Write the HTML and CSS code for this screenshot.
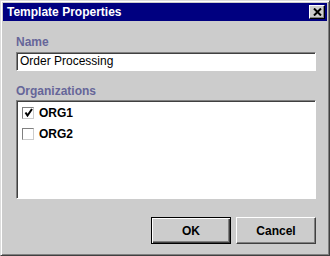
FILE: index.html
```html
<!DOCTYPE html>
<html lang="en">
<head>
  <meta charset="UTF-8" />
  <title>Template Properties</title>
  <link rel="stylesheet" href="styles.css">
</head>
<body>
  <div class="window">
    <div class="titlebar">
      <span class="title">Template Properties</span>
      <div class="close-btn">
        <svg width="9" height="8" viewBox="0 0 9 8">
          <path d="M1 0.5 L8 7.5 M8 0.5 L1 7.5" stroke="#000" stroke-width="2" fill="none"/>
        </svg>
      </div>
    </div>

    <div class="content">
      <div class="label">Name</div>
      <div class="textfield">Order Processing</div>

      <div class="label label-orgs">Organizations</div>
      <div class="list">
        <div class="row">
          <span class="checkbox">
            <svg width="9" height="9" viewBox="0 0 9 9">
              <path d="M1.5 4.5 L3.5 7.5 L8 1" stroke="#000" stroke-width="2" fill="none"/>
            </svg>
          </span>
          <span class="row-text">ORG1</span>
        </div>
        <div class="row">
          <span class="checkbox"></span>
          <span class="row-text">ORG2</span>
        </div>
      </div>

      <div class="buttons">
        <div class="btn btn-default">OK</div>
        <div class="btn">Cancel</div>
      </div>
    </div>
  </div>
</body>
</html>
```

FILE: styles.css
```css
body { margin: 0; font-family: "Liberation Sans", Arial, sans-serif; font-size: 12px; background: #cccccc; }

.window { width: 330px; height: 256px; box-sizing: border-box; background: #cccccc; border-top: 1px solid #dcdcdc; border-left: 1px solid #dcdcdc; border-right: 1px solid #404040; border-bottom: 1px solid #404040; padding: 2px; box-shadow: inset 1px 1px 0 #ffffff, inset -1px -1px 0 #808080; display: flex; flex-direction: column; }

.titlebar { height: 18px; background: #000080; display: flex; align-items: center; justify-content: space-between; padding: 0 2px 0 4px; }
.title { color: #ffffff; font-weight: bold; font-size: 12px; }
.close-btn { width: 16px; height: 14px; box-sizing: border-box; background: #cccccc; border-top: 1px solid #ffffff; border-left: 1px solid #ffffff; border-right: 1px solid #000000; border-bottom: 1px solid #000000; box-shadow: inset -1px -1px 0 #808080; display: flex; align-items: center; justify-content: center; }

.content { flex: 1; display: flex; flex-direction: column; padding: 14px 11px 9px 13px; }

.label { height: 14px; line-height: 14px; font-weight: bold; color: #666699; margin-bottom: 3px; }
.label-orgs { margin-top: 13px; margin-bottom: 2px; }

.textfield { height: 19px; box-sizing: border-box; background: #ffffff; border-top: 1px solid #808080; border-left: 1px solid #808080; border-right: 1px solid #ffffff; border-bottom: 1px solid #ffffff; box-shadow: inset 1px 1px 0 #404040; padding: 0 3px; line-height: 17px; color: #000000; }

.list { height: 99px; box-sizing: border-box; background: #ffffff; border-top: 1px solid #808080; border-left: 1px solid #808080; border-right: 1px solid #ffffff; border-bottom: 1px solid #ffffff; box-shadow: inset 1px 1px 0 #404040; padding: 1px 0 0 5px; }
.row { height: 21px; display: flex; align-items: center; }
.checkbox { width: 12px; height: 12px; box-sizing: border-box; border-top: 1px solid #808080; border-left: 1px solid #808080; border-right: 1px solid #cccccc; border-bottom: 1px solid #cccccc; background: #ffffff; display: flex; align-items: center; justify-content: center; }
.row-text { margin-left: 5px; font-weight: bold; color: #000000; }

.buttons { margin-top: 18px; display: flex; justify-content: flex-end; gap: 5px; }
.btn { width: 80px; height: 27px; box-sizing: border-box; border-top: 1px solid #ffffff; border-left: 1px solid #ffffff; border-right: 1px solid #404040; border-bottom: 1px solid #404040; box-shadow: inset -1px -1px 0 #808080; display: flex; align-items: center; justify-content: center; font-weight: bold; color: #000000; }
.btn-default { border: 1px solid #000000; box-shadow: inset 1px 1px 0 #ffffff, inset -1px -1px 0 #404040, inset -2px -2px 0 #808080; }
```
